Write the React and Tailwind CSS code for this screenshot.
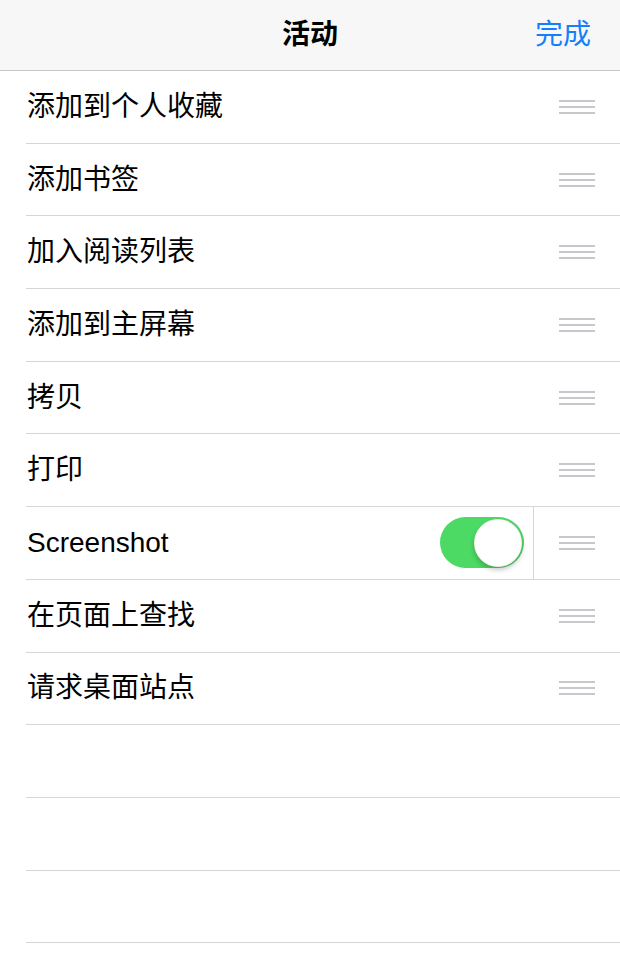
import React from "react";

const items = [
  "添加到个人收藏",
  "添加书签",
  "加入阅读列表",
  "添加到主屏幕",
  "拷贝",
  "打印",
  "Screenshot",
  "在页面上查找",
  "请求桌面站点",
];

function Handle() {
  return (
    <div className="flex w-[36px] flex-col gap-[4px]">
      <div className="h-[2px] w-full bg-[#c7c7cc]" />
      <div className="h-[2px] w-full bg-[#c7c7cc]" />
      <div className="h-[2px] w-full bg-[#c7c7cc]" />
    </div>
  );
}

function Toggle() {
  return (
    <div className="flex h-[51px] w-[84px] items-center justify-end rounded-full bg-[#4cd964] pr-[2px]">
      <div className="h-[48px] w-[48px] rounded-full border border-[rgba(0,0,0,0.05)] bg-white shadow-[0_3px_5px_rgba(0,0,0,0.22)]" />
    </div>
  );
}

export default function App() {
  const rows = [...items, null, null, null];
  return (
    <div
      className="min-h-[980px] w-[620px] bg-white text-black"
      style={{ fontFamily: '"Liberation Sans", "Noto Sans CJK SC", sans-serif' }}
    >
      <div className="relative flex h-[71px] items-center justify-center border-b border-[#c8c7cc] bg-[#f7f7f7]">
        <span className="text-[28px] font-bold leading-none">活动</span>
        <span className="absolute right-[29px] text-[28px] leading-none text-[#157efb]">完成</span>
      </div>
      <div className="pl-[26px]">
        {rows.map((label, i) => (
          <div
            key={i}
            className="flex h-[72.7px] items-center border-b border-[#d6d6da]"
          >
            <div className="flex flex-1 items-center pl-[1px]">
              <span className="text-[28px] leading-none">{label}</span>
            </div>
            {label === "Screenshot" && (
              <div className="flex h-full items-center pr-[9px]">
                <Toggle />
              </div>
            )}
            {label !== null && (
              <div
                className={
                  label === "Screenshot"
                    ? "flex h-full w-[87px] items-center justify-center border-l border-[#d6d6da]"
                    : "flex h-full w-[87px] items-center justify-center"
                }
              >
                <Handle />
              </div>
            )}
          </div>
        ))}
      </div>
    </div>
  );
}
